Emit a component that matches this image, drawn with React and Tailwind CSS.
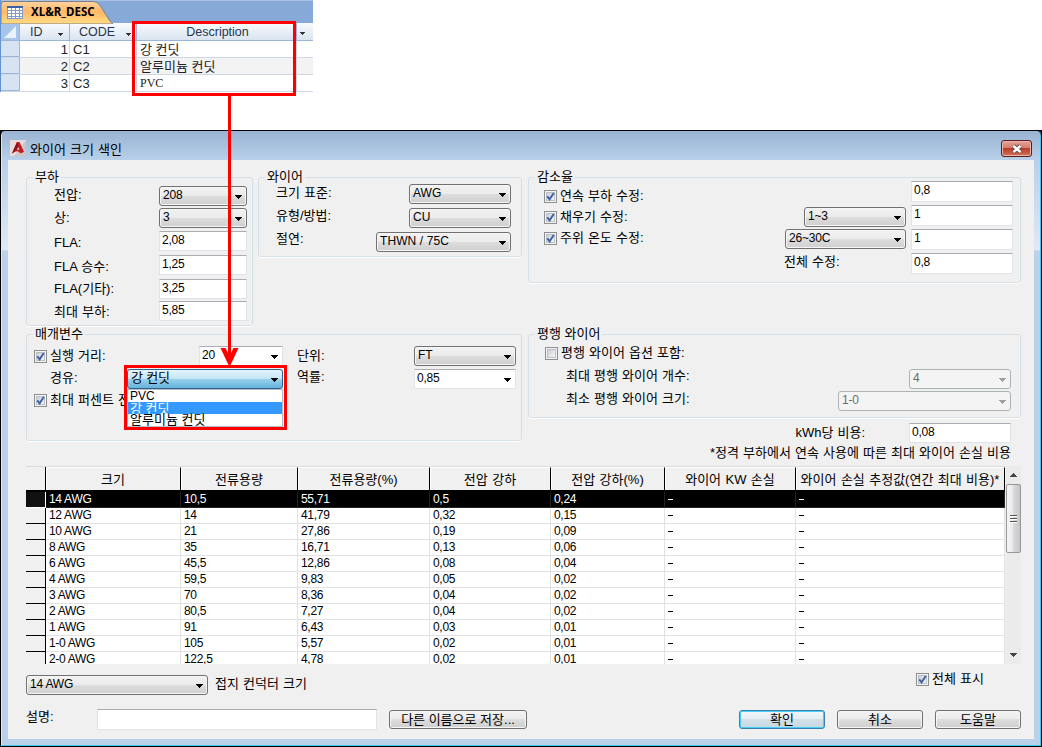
import clsx from 'clsx';

const ACCESS_ROWS = [
  { id: 1, code: 'C1', description: '강 컨딧' },
  { id: 2, code: 'C2', description: '알루미늄 컨딧' },
  { id: 3, code: 'C3', description: 'PVC' },
];

const COLUMNS = [
  { title: '크기', width: 'w-[135px]' },
  { title: '전류용량', width: 'w-[117px]' },
  { title: '전류용량(%)', width: 'w-[132px]' },
  { title: '전압 강하', width: 'w-[121px]' },
  { title: '전압 강하(%)', width: 'w-[114px]' },
  { title: '와이어 KW 손실', width: 'w-[131px]' },
  { title: '와이어 손실 추정값(연간 최대 비용)*', width: 'w-[209px]' },
];

const WIRES = [
  ['14 AWG', '10,5', '55,71', '0,5', '0,24', '-', '-'],
  ['12 AWG', '14', '41,79', '0,32', '0,15', '-', '-'],
  ['10 AWG', '21', '27,86', '0,19', '0,09', '-', '-'],
  ['8 AWG', '35', '16,71', '0,13', '0,06', '-', '-'],
  ['6 AWG', '45,5', '12,86', '0,08', '0,04', '-', '-'],
  ['4 AWG', '59,5', '9,83', '0,05', '0,02', '-', '-'],
  ['3 AWG', '70', '8,36', '0,04', '0,02', '-', '-'],
  ['2 AWG', '80,5', '7,27', '0,04', '0,02', '-', '-'],
  ['1 AWG', '91', '6,43', '0,03', '0,01', '-', '-'],
  ['1-0 AWG', '105', '5,57', '0,02', '0,01', '-', '-'],
  ['2-0 AWG', '122,5', '4,78', '0,02', '0,01', '-', '-'],
];

const Arrow = ({ className, up }) => (
  <svg viewBox="0 0 7 4" className={clsx('h-1 w-[7px] shrink-0', className)} shapeRendering="crispEdges">
    <path d={up ? 'M0 4h7L3.5 0z' : 'M0 0h7L3.5 4z'} fill="currentColor" />
  </svg>
);

const Label = ({ children, className }) => (
  <span className={clsx('block h-[18px] shrink-0 whitespace-nowrap text-[13px] leading-[18px] [word-spacing:0.5px]', className)}>
    {children}
  </span>
);

const Select = ({ value, className, disabled, active }) => (
  <div
    className={clsx(
      'flex h-5 shrink-0 items-center justify-between rounded-[3px] border pl-[3px] pr-1 text-[12px] tracking-[-0.2px]',
      disabled && 'border-[#adb2b5] bg-[#f4f4f4] text-[#6d6d6d]',
      active && 'border-[#2c628b] bg-linear-[180deg,#e5f4fc_0%,#c4e5f6_49%,#98d1ef_50%,#68b3db_100%] text-[13px]!',
      !disabled && !active && 'border-[#707070] bg-linear-[180deg,#f2f2f2_0%,#ebebeb_49%,#dddddd_50%,#cfcfcf_100%] shadow-[inset_0_0_0_1px_#f6f6f6]',
      className
    )}
  >
    <span className="-mt-[2px] leading-4">{value}</span>
    <Arrow className={clsx('mt-[2px]', disabled && 'text-[#a0a0a0]')} />
  </div>
);

const Input = ({ value, className, combo }) => (
  <div
    className={clsx(
      'flex shrink-0 items-center justify-between border border-[#e2e3ea] border-t-[#abadb3] bg-white pl-[2px] pr-1 text-[12px] tracking-[-0.2px]',
      className
    )}
  >
    <span className="-mt-[3px] leading-4">{value}</span>
    {combo && <Arrow className="mt-[2px]" />}
  </div>
);

const Box = ({ checked = true }) => (
  <span className="flex size-[13px] shrink-0 items-center justify-center border border-[#8e8f8f] bg-[#f4f4f4]">
    <span className="flex size-[9px] items-center justify-center border border-[#b9c0c8] bg-linear-[135deg,#cbcfd5,#f6f6f6]">
      {checked && (
        <svg viewBox="0 0 9 9" className="size-[9px] shrink-0">
          <path d="M1.3 4.3 3.6 7.3 7.8 1" fill="none" stroke="#3f5fa5" strokeWidth="1.9" />
        </svg>
      )}
    </span>
  </span>
);

const Check = ({ children, className, checked }) => (
  <div className={clsx('flex h-[18px] items-center gap-[3px]', className)}>
    <Box checked={checked} />
    <Label>{children}</Label>
  </div>
);

// the short legend lets the rows start right under the top border
const Group = ({ title, children, className }) => (
  <fieldset className={clsx('min-w-0 rounded-[3px] border border-[#d5dfe5] shadow-[0_1px_0_#fff]', className)}>
    <legend className="ml-[6px] h-2 whitespace-nowrap px-[2px] text-[13px] leading-[7px]">{title}</legend>
    {children}
  </fieldset>
);

const PushButton = ({ children, className, primary }) => (
  <button
    className={clsx(
      'h-[19px] rounded-[3px] border text-[13px] leading-[14px]',
      primary
        ? 'border-[#3c7fb1] bg-linear-[180deg,#f0f6f9_0%,#e4edf2_49%,#d2dfe7_50%,#c8d8e2_100%] shadow-[inset_0_0_0_1px_#46d0f5]'
        : 'border-[#707070] bg-linear-[180deg,#f2f2f2_0%,#ebebeb_49%,#dddddd_50%,#cfcfcf_100%] shadow-[inset_0_0_0_1px_#f6f6f6]',
      className
    )}
  >
    {children}
  </button>
);

const HeaderCell = ({ children, className }) => (
  <div className={clsx('flex items-center border-r border-[#9ab6d8] pt-px text-[12.5px] text-[#26364f]', className)}>
    {children}
  </div>
);

const AccessTable = () => (
  <div className="h-[92px] w-[313px] overflow-hidden border-l border-[#6593cf] bg-white">
    <div className="relative flex h-[23px] bg-[#87a9d7] border-t border-[#a9c1e2]">
      <svg viewBox="0 0 112 23" className="absolute left-0 top-0 h-[23px] w-28">
        <defs>
          <linearGradient id="tab" x1="0" x2="0" y1="0" y2="1">
            <stop offset="0" stopColor="#ffd3a0" />
            <stop offset="0.45" stopColor="#ffb868" />
            <stop offset="1" stopColor="#ffdc85" />
          </linearGradient>
        </defs>
        <path d="M0 23V3Q0 .5 3 .5H91C96 .5 98 3 100 6L107 17Q109.500 21.500 112 23z" fill="url(#tab)" stroke="#7d7f86" />
      </svg>
      <div className="relative flex items-center gap-2 pl-[6px]">
        <svg viewBox="0 0 16 13" className="h-[13px] w-4" shapeRendering="crispEdges">
          <path d="M0 0h16v13H0z" fill="#7f9cc9" />
          <path d="M0 0h16v2H0z" fill="#3a62a4" />
          <path
            d="M1 2h3v2H1zM5 2h3v2H5zM9 2h3v2H9zM13 2h2v2h-2zM1 5h3v2H1zM5 5h3v2H5zM9 5h3v2H9zM13 5h2v2h-2zM1 8h3v2H1zM5 8h3v2H5zM9 8h3v2H9zM13 8h2v2h-2zM1 11h3v1H1zM5 11h3v1H5zM9 11h3v1H9zM13 11h2v1h-2z"
            fill="#fff"
          />
        </svg>
        <span className="font-['Noto_Sans','Open_Sans',sans-serif] text-[11.5px] font-bold">XL&amp;R_DESC</span>
      </div>
    </div>

    <div className="flex h-[18px] border-b border-[#9ab6d8] bg-linear-[180deg,#f9fbfd,#d9e4f1]">
      <div className="flex w-[19px] items-center justify-center border-r border-[#9ab6d8] bg-[#a9c4e9]">
        <svg viewBox="0 0 14 14" className="size-[14px]">
          <path d="M13 1v12H1z" fill="#e9f1fb" />
        </svg>
      </div>
      <HeaderCell className="w-[50px] justify-between pl-[10px] pr-[6px]">
        ID <Arrow className="mt-1 h-[3px]! w-[5px]! text-[#333]" />
      </HeaderCell>
      <HeaderCell className="w-[67px] justify-between pl-[9px] pr-[5px]">
        CODE <Arrow className="mt-1 h-[3px]! w-[5px]! text-[#333]" />
      </HeaderCell>
      <HeaderCell className="w-[160px] justify-center pl-[2px]">Description</HeaderCell>
      <div className="flex items-center pl-[3px]">
        <Arrow className="mt-1 h-[3px]! w-[5px]! text-[#333]" />
      </div>
    </div>

    {ACCESS_ROWS.map((row, i) => (
      <div
        key={row.id}
        className={clsx('flex h-[17px] border-b border-[#d0d7e5] text-[13px] leading-[17px] text-[#222]', i === 1 && 'bg-[#f3f3f3]')}
      >
        <div className="w-[19px] border-r border-b border-[#9ab6d8] bg-[#d6e3f3]" />
        <div className="w-[50px] border-r border-[#d0d7e5] pr-[1px] text-right">{row.id}</div>
        <div className="w-[67px] border-r border-[#d0d7e5] pl-[3px]">{row.code}</div>
        <div className={clsx('w-[160px] border-r border-[#d0d7e5] pl-[3px]', i === 2 && "font-['Liberation_Serif',serif] text-[12px]")}>
          {row.description}
        </div>
      </div>
    ))}
  </div>
);

const TitleBar = () => (
  <div className="flex h-[29px] items-center rounded-t-[5px] bg-linear-[180deg,#9ab3d2,#b8d0e9] pl-2">
    <svg viewBox="0 0 16 16" className="mt-[5px] size-4">
      <path d="M0 0h16v16H0z" fill="#e6dcde" />
      <path d="M16 0v16H4z" fill="#cfc3c6" />
      <path d="M7 2h2.500l4.500 10-3.500 1.200-2.500-2-3 .3L2 13.500z" fill="#c01a22" />
      <path d="M7 2 2 13.500l3-2L8.500 6z" fill="#8d1218" />
      <path d="M8.200 7 7 9.800h2.500z" fill="#f0d5d5" />
    </svg>
    <span className="ml-1 mt-[8px] text-[13px] leading-4 [word-spacing:0.5px]">와이어 크기 색인</span>
    <button className="ml-auto mr-2 mt-[6px] flex h-[17px] w-[31px] items-center justify-center rounded-[3px] border border-[#5a1c1c] bg-linear-[180deg,#e5a398_0%,#d27b6b_48%,#b93c28_50%,#d0725e_100%] shadow-[inset_0_0_0_1px_#eab5aa]">
      <svg viewBox="0 0 12 10" className="h-[10px] w-3">
        <path d="M2.500 2l7 6M9.500 2l-7 6" stroke="#5c4747" strokeWidth="4.400" />
        <path d="M2.500 2l7 6M9.500 2l-7 6" stroke="#fff" strokeWidth="2.600" />
      </svg>
    </button>
  </div>
);

const LoadGroup = () => (
  <Group title="부하" className="h-[153px] w-[227px]">
    <div className="flex justify-between pl-[27px] pr-[5px]">
      <div className="mt-[5px] flex flex-col">
        <Label>전압:</Label>
        <Label className="mt-[5px]">상:</Label>
        <Label className="mt-[7px]">FLA:</Label>
        <Label className="mt-[6px]">FLA 승수:</Label>
        <Label className="mt-[4px]">FLA(기타):</Label>
        <Label className="mt-[5px]">최대 부하:</Label>
      </div>
      <div className="mt-[5px] flex w-[88px] flex-col">
        <Select value="208" />
        <Select value="3" className="mt-[2px]" />
        <Input value="2,08" className="mt-[3px] h-5" />
        <Input value="1,25" className="mt-1 h-5" />
        <Input value="3,25" className="mt-1 h-5" />
        <Input value="5,85" className="mt-[2px] h-5" />
      </div>
    </div>
  </Group>
);

const WireGroup = () => (
  <Group title="와이어" className="h-[84px] w-[264px]">
    <div className="flex justify-between pl-[17px] pr-[10px]">
      <div className="mt-[3px] flex flex-col gap-[5px]">
        <Label>크기 표준:</Label>
        <Label>유형/방법:</Label>
        <Label>절연:</Label>
      </div>
      <div className="mt-[3px] flex flex-col items-end gap-1">
        <Select value="AWG" className="w-[102px] tracking-normal!" />
        <Select value="CU" className="w-[102px] tracking-normal!" />
        <Select value="THWN / 75C" className="w-[135px] tracking-[0.1px]!" />
      </div>
    </div>
  </Group>
);

const ParameterGroup = () => (
  <Group title="매개변수" className="h-[111px] w-[496px]">
    <div className="flex">
      <div className="ml-[7px] mt-[9px] flex w-[93px] flex-col">
        <Check>실행 거리:</Check>
        <Label className="ml-4 mt-[4px]">경유:</Label>
        <Check className="mt-[4px]">최대 퍼센트 전</Check>
      </div>
      <div className="relative mt-2 flex w-[156px] flex-col items-end">
        <Input combo value="20" className="h-[20px] w-[84px]" />
        <Select active value="강 컨딧" className="mt-[3px] w-[156px]" />
        <ul className="absolute right-0 top-[43px] w-[156px] border border-[#b8bcc4] bg-white text-[13px] leading-[12px]">
          <li className="h-3 pl-[2px] text-[12px]">PVC</li>
          <li className="h-3 overflow-hidden bg-[#3399ff] pl-[2px] leading-[13px] text-white">강 컨딧</li>
          <li className="h-3 pl-[2px]">알루미늄 컨딧</li>
        </ul>
      </div>
      <div className="ml-[14px] mt-[9px] flex w-[117px] flex-col gap-[3px]">
        <Label>단위:</Label>
        <Label>역률:</Label>
      </div>
      <div className="mt-2 flex w-[102px] flex-col gap-[3px]">
        <Select value="FT" className="tracking-normal!" />
        <Input combo value="0,85" className="h-5" />
      </div>
    </div>
  </Group>
);

const DeratingGroup = () => (
  <Group title="감소율" className="h-[110px] w-[493px]">
    <div className="flex">
      <div className="ml-[15px] mt-[6px] flex w-[200px] flex-col gap-[3px]">
        <Check>연속 부하 수정:</Check>
        <Check>채우기 수정:</Check>
        <Check>주위 온도 수정:</Check>
      </div>
      <div className="ml-auto mt-[26px] flex w-[121px] flex-col items-end gap-[2px]">
        <Select value="1~3" className="w-[102px]" />
        <Select value="26~30C" className="w-[121px]" />
        <Label className="-ml-px mt-[2px] self-start">전체 수정:</Label>
      </div>
      <div className="ml-[5px] mr-[7px] flex w-[102px] flex-col gap-[3px]">
        <Input value="0,8" className="h-[21px]" />
        <Input value="1" className="h-[21px]" />
        <Input value="1" className="h-[21px]" />
        <Input value="0,8" className="h-[21px]" />
      </div>
    </div>
  </Group>
);

const ParallelGroup = () => (
  <Group title="평행 와이어" className="h-[88px] w-[493px]">
    <div className="flex justify-between pl-4 pr-[9px]">
      <div className="mt-[6px] flex flex-col">
        <Check checked={false}>평행 와이어 옵션 포함:</Check>
        <Label className="ml-[21px] mt-[5px]">최대 평행 와이어 개수:</Label>
        <Label className="ml-[21px] mt-[5px]">최소 평행 와이어 크기:</Label>
      </div>
      <div className="mt-[31px] flex flex-col items-end gap-[2px]">
        <Select disabled value="4" className="w-[102px]" />
        <Select disabled value="1-0" className="w-[173px]" />
      </div>
    </div>
  </Group>
);

const WireTable = () => (
  <div className="ml-[18px] flex h-[198px] w-[995px]">
    <div className="w-[979px] overflow-hidden border-t border-[#dcdcdc] bg-white">
      <div className="flex h-[25px] border-b-2 border-black bg-[#f0f0f0]">
        <div className="w-5 shrink-0 border-r border-black" />
        {COLUMNS.map((col) => (
          <div
            key={col.title}
            className={clsx('flex shrink-0 items-center justify-center whitespace-nowrap border-r border-black border-t border-t-white pt-[2px] text-[13px] shadow-[inset_1px_0_0_#fff] [word-spacing:0.8px]', col.width)}
          >
            {col.title}
          </div>
        ))}
      </div>
      {WIRES.map((cells, row) => (
        <div key={cells[0]} className={clsx('flex h-4', row === 0 && 'bg-black text-white')}>
          <div
            className={clsx(
              'w-5 shrink-0 border-r border-b',
              row === 0 ? 'border-r-white border-b-white bg-[#111]' : 'border-black bg-[#f0f0f0]'
            )}
          />
          {cells.map((cell, i) => (
            <div
              key={i}
              className={clsx(
                'shrink-0 border-r border-b pl-[3px] text-[12px] leading-[14px] tracking-[-0.3px]',
                row === 0 ? 'border-[#222]' : 'border-[#e2e2e2]',
                COLUMNS[i].width
              )}
            >
              {cell === '-' ? <span className="inline-block h-px w-[5px] bg-current align-middle text-current" /> : cell}
            </div>
          ))}
        </div>
      ))}
    </div>
    <div className="ml-[1px] flex w-[15px] flex-col items-center bg-[#ebebeb]">
      <Arrow up className="mt-[7px] text-[#444]" />
      <div className="mt-[7px] flex h-[69px] w-[15px] flex-col items-center justify-center gap-[1px] rounded-[2px] border border-[#979797] bg-linear-[90deg,#f5f5f5_0%,#e9e9eb_45%,#d9dadc_50%,#c5c6c9_100%]">
        <span className="h-[2px] w-[7px] border-b border-white bg-[#555]" />
        <span className="h-[2px] w-[7px] border-b border-white bg-[#555]" />
        <span className="h-[2px] w-[7px] border-b border-white bg-[#555]" />
      </div>
      <Arrow className="mb-[7px] mt-auto text-[#444]" />
    </div>
  </div>
);

const Footer = () => (
  <>
    <div className="flex h-[31px] items-start pl-[18px]">
      <Select value="14 AWG" className="mt-[11px] w-[182px]" />
      <Label className="ml-[7px] mt-[11px]">접지 컨덕터 크기</Label>
      <Check className="ml-auto mr-[50px] mt-[6px]">전체 표시</Check>
    </div>
    <div className="mt-[14px] flex items-start pl-[18px]">
      <Label className="-mt-[1px] w-[71px]">설명:</Label>
      <Input className="h-[21px] w-[280px]" />
      <PushButton className="ml-3 mt-[1px] w-[138px]">다른 이름으로 저장...</PushButton>
      <div className="ml-auto mr-[13px] mt-[1px] flex gap-3">
        <PushButton primary className="w-[86px]">확인</PushButton>
        <PushButton className="w-[86px]">취소</PushButton>
        <PushButton className="w-[86px]">도움말</PushButton>
      </div>
    </div>
  </>
);

const WireDialog = () => (
  <div className="mt-[38px] h-[617px] w-[1042px] border border-black bg-[#1f3a5f]">
    <div className="h-[615px] rounded-t-[5px] border-l border-r border-b border-l-[#dbe8f6] border-r-[#3fc8ea] border-b-[#3fc8ea] bg-linear-[180deg,#b8d0e9_0px,#b8d0e9_30px,#dfe9f7_119px,#bad1ea_120px]">
      <TitleBar />
      <div className="mx-[6px] flex h-[579px] flex-col overflow-hidden bg-[#f0f0f0]">
        <div className="flex h-[306px] gap-[6px] pl-[18px] pt-[13px]">
          <div className="flex w-[496px] flex-col">
            <div className="flex h-[157px] gap-[5px]">
              <LoadGroup />
              <WireGroup />
            </div>
            <ParameterGroup />
          </div>
          <div className="flex w-[493px] flex-col">
            <div className="h-[157px]">
              <DeratingGroup />
            </div>
            <ParallelGroup />
            <div className="mt-[5px] flex items-center justify-end pr-[10px]">
              <Label className="-mt-[1px] mr-[44px]">kWh당 비용:</Label>
              <Input value="0,08" className="h-5 w-[102px]" />
            </div>
            <Label className="mr-[10px] mt-[1px] self-end">*정격 부하에서 연속 사용에 따른 최대 와이어 손실 비용</Label>
          </div>
        </div>
        <WireTable />
        <Footer />
      </div>
    </div>
  </div>
);

// red frames and the arrow that link the table column to the drop-down
const Callouts = () => (
  <svg viewBox="0 0 1042 747" className="pointer-events-none absolute inset-0 h-[747px] w-[1042px]" fill="none" stroke="#f00" strokeWidth="3">
    <path d="M133.500 22.500h161v72h-161zM125.500 366.500h160v62h-160zM229.500 95v266" />
    <path d="M220.500 348h5l4 8 4-8h5l-8 17h-2z" fill="#f00" stroke="none" />
  </svg>
);

export default function App() {
  return (
    <div className="relative flex h-[747px] w-[1042px] flex-col overflow-hidden bg-white font-['Liberation_Sans','Noto_Sans_CJK_KR',sans-serif] text-black">
      <AccessTable />
      <WireDialog />
      <Callouts />
    </div>
  );
}
